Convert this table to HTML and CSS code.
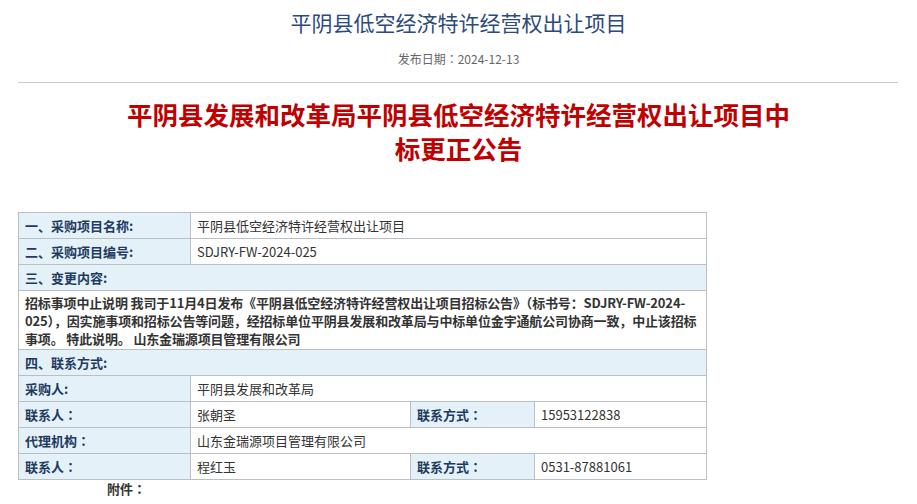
FILE: index.html
```html
<!DOCTYPE html>
<html lang="zh-CN">
<head>
<meta charset="utf-8">
<title>平阴县低空经济特许经营权出让项目</title>
<link rel="stylesheet" href="styles.css">
</head>
<body>
<div class="page">
  <div class="header">
    <h1 class="title">平阴县低空经济特许经营权出让项目</h1>
    <div class="date">发布日期<span class="pc" lang="zh-TW">：</span>2024-12-13</div>
  </div>
  <div class="rule"></div>
  <h2 class="heading">平阴县发展和改革局平阴县低空经济特许经营权出让项目中标更正公告</h2>
  <table class="info">
    <colgroup>
      <col class="c1"><col class="c2"><col class="c3"><col class="c4">
    </colgroup>
    <tr><td class="lbl">一、采购项目名称:</td><td class="val" colspan="3">平阴县低空经济特许经营权出让项目</td></tr>
    <tr><td class="lbl">二、采购项目编号:</td><td class="val" colspan="3">SDJRY-FW-2024-025</td></tr>
    <tr><td class="lbl" colspan="4">三、变更内容:</td></tr>
    <tr><td class="content" colspan="4">招标事项中止说明 我司于11月4日发布《平阴县低空经济特许经营权出让项目招标公告》（标书号：SDJRY-FW-2024-025），因实施事项和招标公告等问题，经招标单位平阴县发展和改革局与中标单位金宇通航公司协商一致，中止该招标事项。 特此说明。 山东金瑞源项目管理有限公司</td></tr>
    <tr><td class="lbl" colspan="4">四、联系方式:</td></tr>
    <tr><td class="lbl">采购人:</td><td class="val" colspan="3">平阴县发展和改革局</td></tr>
    <tr><td class="lbl">联系人<span class="pc" lang="zh-TW">：</span></td><td class="val">张朝圣</td><td class="lbl">联系方式<span class="pc" lang="zh-TW">：</span></td><td class="val">15953122838</td></tr>
    <tr><td class="lbl">代理机构<span class="pc" lang="zh-TW">：</span></td><td class="val" colspan="3">山东金瑞源项目管理有限公司</td></tr>
    <tr><td class="lbl">联系人<span class="pc" lang="zh-TW">：</span></td><td class="val">程红玉</td><td class="lbl">联系方式<span class="pc" lang="zh-TW">：</span></td><td class="val">0531-87881061</td></tr>
  </table>
  <div class="attach">附件<span class="pc" lang="zh-TW">：</span></div>
</div>
</body>
</html>
```

FILE: styles.css
```css
html, body {
  margin: 0;
  padding: 0;
  background: #fff;
}
body {
  font-family: "Noto Sans CJK SC", "Noto Sans", sans-serif;
  color: #333;
}
.page {
  width: 917px;
}
.pc {
  font-family: "Noto Sans CJK TC", "Noto Sans CJK SC", sans-serif;
}
.header {
  padding-top: 8px;
  text-align: center;
}
.title {
  margin: 0;
  font-size: 21px;
  line-height: 28px;
  font-weight: normal;
  color: #2c4a7c;
}
.date {
  margin-top: 14px;
  font-size: 12px;
  line-height: 18px;
  color: #666;
}
.rule {
  margin: 14px 19px 0 18px;
  border-top: 1px solid #c6ccd3;
}
.heading {
  width: 672px;
  margin: 14px auto 0;
  font-size: 25.5px;
  line-height: 34px;
  font-weight: bold;
  color: #c00000;
  text-align: center;
}
.info {
  margin: 47px 0 0 18px;
  width: 688px;
  border-collapse: collapse;
  table-layout: fixed;
  font-size: 13px;
}
.c1 { width: 172px; }
.c2 { width: 220px; }
.c3 { width: 124px; }
.c4 { width: 172px; }
.info td {
  border: 1px solid #b9bfc5;
  padding: 0 6px;
  line-height: 25px;
  height: 25px;
  vertical-align: middle;
}
.info td.lbl {
  background: #e5f1f8;
  color: #1e3a60;
  font-weight: bold;
}
.info td.val {
  color: #333;
}
.info td.content {
  padding: 3px 0 1px 6px;
  line-height: 18px;
  font-weight: bold;
  letter-spacing: -0.15px;
  color: #333;
}
.attach {
  margin-top: 0;
  padding-left: 107px;
  font-size: 13px;
  line-height: 18px;
  font-weight: bold;
  color: #333;
}
```
